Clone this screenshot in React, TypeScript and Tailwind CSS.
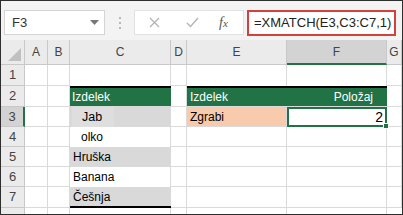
import React from 'react'

const COLS = ['A', 'B', 'C', 'D', 'E', 'F', 'G']

function HeadCell({ label, active }: { label: string; active?: boolean }) {
  return (
    <div
      className={
        'flex items-center justify-center border-r border-b border-[#c8c8c8] text-[12px] text-[#444] ' +
        (active ? 'bg-[#d3d3d3] border-b-2 border-b-[#217346]' : 'bg-[#ebebeb]')
      }
    >
      {label}
    </div>
  )
}

function RowHead({ n, active }: { n: number; active?: boolean }) {
  return (
    <div
      className={
        'flex items-center justify-center border-b border-r border-[#c8c8c8] text-[13px] text-[#444] ' +
        (active ? 'bg-[#d3d3d3] border-r-2 border-r-[#217346]' : 'bg-[#ebebeb]')
      }
    >
      {n}
    </div>
  )
}

function Cell({ className = '', children }: { className?: string; children?: React.ReactNode }) {
  return (
    <div className={'flex items-center overflow-hidden whitespace-nowrap border-r border-b border-[#dadada] text-[12px] text-black ' + className}>
      {children}
    </div>
  )
}

export default function App() {
  const green = 'bg-[#217346] text-white border-t-2 border-t-black border-r-0'

  return (
    <div className="w-[403px] h-[215px] border border-[#2e2e2e] bg-white overflow-hidden font-['Liberation_Sans',Arial,sans-serif]">
      {/* formula bar */}
      <div className="h-[39px] bg-[#f3f3f3] flex items-start pt-[9px]">
        <div className="ml-[3px] w-[101px] h-[25px] bg-white border border-[#d4d4d4] flex items-center justify-between pl-[7px] pr-[5px]">
          <span className="text-[13px] text-[#333]">F3</span>
          <svg width="9" height="6" viewBox="0 0 9 6">
            <path d="M0 0 L9 0 L4.5 5 Z" fill="#777" />
          </svg>
        </div>
        <div className="ml-[14px] mt-[7px] flex flex-col gap-[3px]">
          <div className="w-[2px] h-[2px] bg-[#b8b8b8]" />
          <div className="w-[2px] h-[2px] bg-[#b8b8b8]" />
          <div className="w-[2px] h-[2px] bg-[#b8b8b8]" />
        </div>
        <div className="ml-[13px] w-[110px] h-[25px] bg-white border border-[#e2e2e2] flex items-center">
          <svg className="ml-[14px]" width="11" height="11" viewBox="0 0 11 11">
            <path d="M1 1 L10 10 M10 1 L1 10" stroke="#b4b4b4" strokeWidth="1.3" />
          </svg>
          <svg className="ml-[26px]" width="13" height="11" viewBox="0 0 13 11">
            <path d="M1 6 L4.5 9.5 L12 1" stroke="#b4b4b4" strokeWidth="1.4" fill="none" />
          </svg>
          <span className="ml-[20px] text-[14px] italic text-[#555] font-['Liberation_Serif',serif]">
            f<span className="text-[11px]">x</span>
          </span>
        </div>
        <div className="ml-[3px] w-[149px] h-[26px] bg-white border-2 border-[#d6403a] flex items-center pl-[5px]">
          <span className="text-[13px] text-[#222] whitespace-nowrap">=XMATCH(E3,C3:C7,1)</span>
        </div>
      </div>

      {/* grid */}
      <div className="grid grid-cols-[24px_23px_22px_101px_16px_100px_100px_15px] grid-rows-[25px_21px_21px_20px_20px_20px_20px_21px_6px]">
        <div className="relative bg-[#ebebeb] border-r border-b border-[#c8c8c8]">
          <svg className="absolute right-[3px] bottom-[3px]" width="13" height="13" viewBox="0 0 13 13">
            <path d="M13 0 L13 13 L0 13 Z" fill="#c0c0c0" />
          </svg>
        </div>
        {COLS.map((c) => (
          <HeadCell key={c} label={c} active={c === 'F'} />
        ))}

        {/* row 1 */}
        <RowHead n={1} />
        <Cell />
        <Cell />
        <Cell className="border-b-0" />
        <Cell />
        <Cell className="border-b-0" />
        <Cell className="border-b-0" />
        <Cell />

        {/* row 2 */}
        <RowHead n={2} />
        <Cell />
        <Cell />
        <Cell className={green + ' pl-[2px]'}>Izdelek</Cell>
        <Cell />
        <Cell className={green + ' pl-[3px]'}>Izdelek</Cell>
        <Cell className={green + ' justify-end pr-[14px]'}>Položaj</Cell>
        <Cell />

        {/* row 3 */}
        <RowHead n={3} active />
        <Cell />
        <Cell />
        <Cell className="bg-[#d9d9d9] border-r-0 border-b-0">
          <span className="ml-[2px] pl-[10px] pr-[12px] h-full flex items-center bg-[#dedede] text-[12.5px]">Jab</span>
          <span className="flex-1 h-full bg-[#d9d9d9]" />
        </Cell>
        <Cell />
        <Cell className="bg-[#f8cbad] pl-[3px]">Zgrabi</Cell>
        <div className="relative border-2 border-[#217346] flex items-center justify-end pr-[2px] text-[14px]">
          2
          <div className="absolute -right-[4px] -bottom-[4px] w-[6px] h-[6px] bg-[#217346] border border-white" />
        </div>
        <Cell />

        {/* row 4 */}
        <RowHead n={4} />
        <Cell />
        <Cell />
        <Cell className="border-b-0 pl-[11px] text-[12.5px]">olko</Cell>
        <Cell />
        <Cell />
        <Cell />
        <Cell />

        {/* row 5 */}
        <RowHead n={5} />
        <Cell />
        <Cell />
        <Cell className="bg-[#d9d9d9] border-r-0 border-b-0 pl-[3px] text-[11.5px]">Hruška</Cell>
        <Cell />
        <Cell />
        <Cell />
        <Cell />

        {/* row 6 */}
        <RowHead n={6} />
        <Cell />
        <Cell />
        <Cell className="border-b-0 pl-[3px] text-[11.5px]">Banana</Cell>
        <Cell />
        <Cell />
        <Cell />
        <Cell />

        {/* row 7 */}
        <RowHead n={7} />
        <Cell />
        <Cell />
        <Cell className="bg-[#d9d9d9] border-r-0 border-b-2 border-b-black pl-[3px] text-[12px]">Češnja</Cell>
        <Cell />
        <Cell />
        <Cell />
        <Cell />

        {/* row 8 (cut off) */}
        <div className="bg-[#ebebeb] border-r border-[#c8c8c8]" />
        <div className="border-r border-[#dadada]" />
        <div className="border-r border-[#dadada]" />
        <div className="border-r border-[#dadada]" />
        <div className="border-r border-[#dadada]" />
        <div className="border-r border-[#dadada]" />
        <div className="border-r border-[#dadada]" />
        <div />
      </div>
    </div>
  )
}
